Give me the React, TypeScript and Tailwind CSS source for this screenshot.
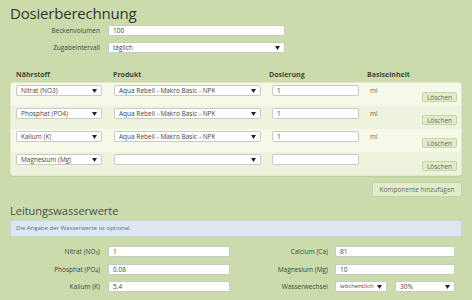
import React from "react";

const FONT = { fontFamily: '"Open Sans", "Noto Sans", sans-serif' };

function Arrow() {
  return (
    <svg width="5" height="4" viewBox="0 0 5 4" className="shrink-0">
      <path d="M0 0 L5 0 L2.5 4 Z" fill="#222" />
    </svg>
  );
}

function Input({ value = "", className = "" }: { value?: string; className?: string }) {
  return (
    <div
      className={`h-[11px] bg-white border border-[#c9c9c9] rounded-[2px] px-[4px] flex items-center text-[6.5px] text-[#444] leading-[9px] ${className}`}
    >
      {value}
    </div>
  );
}

function Select({ value = "", className = "" }: { value?: string; className?: string }) {
  return (
    <div
      className={`h-[11px] bg-white border border-[#c9c9c9] rounded-[2px] pl-[4px] pr-[4px] flex items-center justify-between gap-[2px] text-[6.5px] text-[#444] leading-[9px] ${className}`}
    >
      <span className="whitespace-nowrap overflow-hidden">{value}</span>
      <Arrow />
    </div>
  );
}

function Button({ children, className = "" }: { children: React.ReactNode; className?: string }) {
  return (
    <div
      className={`bg-[#e3ecca] border border-[#c6d5a8] rounded-[2px] text-[6.5px] text-[#5f6e52] flex items-center justify-center leading-[9px] whitespace-nowrap ${className}`}
    >
      {children}
    </div>
  );
}

const ROWS = [
  { n: "Nitrat (NO3)", p: "Aqua Rebell - Makro Basic - NPK", d: "1", u: "ml" },
  { n: "Phosphat (PO4)", p: "Aqua Rebell - Makro Basic - NPK", d: "1", u: "ml" },
  { n: "Kalium (K)", p: "Aqua Rebell - Makro Basic - NPK", d: "1", u: "ml" },
  { n: "Magnesium (Mg)", p: "", d: "", u: "" },
];

function Sub({ children }: { children: React.ReactNode }) {
  return <sub className="text-[4.5px] align-baseline relative top-[1px]">{children}</sub>;
}

export default function App() {
  return (
    <div className="w-[472px] h-[300px] bg-[#cadcab] overflow-hidden relative" style={FONT}>
      <div className="px-[10px] pt-[3px]">
        <h1 className="text-[15px] text-[#333] leading-[20px] tracking-[-0.2px]">Dosierberechnung</h1>

        <div className="flex flex-col gap-[6px] mt-[2px]">
          <div className="flex items-center">
            <div className="w-[90px] text-right text-[6.5px] text-[#444] leading-[9px]">Beckenvolumen</div>
            <Input value="100" className="ml-[8px] w-[177px]" />
          </div>
          <div className="flex items-center">
            <div className="w-[90px] text-right text-[6.5px] text-[#444] leading-[9px]">Zugabeintervall</div>
            <Select value="täglich" className="ml-[8px] w-[177px]" />
          </div>
        </div>

        <div className="flex text-[7px] font-bold text-[#444] mt-[16px] pl-[6px] h-[12px] items-center">
          <div className="w-[97px]">Nährstoff</div>
          <div className="w-[156px]">Produkt</div>
          <div className="w-[98px]">Dosierung</div>
          <div>Basiseinheit</div>
        </div>

        <div className="mt-[1px] rounded-[3px] overflow-hidden border border-[#dfe7cc] shadow-[0_1px_1px_rgba(0,0,0,0.06)]">
          {ROWS.map((r, i) => (
            <div
              key={i}
              className={`flex h-[23px] pl-[5px] pr-[4px] pt-[2px] ${i % 2 === 0 ? "bg-[#f6f9ea]" : "bg-[#eef3de]"}`}
            >
              <Select value={r.n} className="w-[86px]" />
              <Select value={r.p} className="w-[147px] ml-[12px]" />
              <Input value={r.d} className="w-[87px] ml-[11px]" />
              <div className="ml-[11px] text-[6.5px] text-[#666] leading-[9px] pt-[1px] w-[40px]">{r.u}</div>
              <div className="flex-1 flex justify-end items-end pb-[4px]">
                <Button className="w-[35px] h-[10px]">Löschen</Button>
              </div>
            </div>
          ))}
        </div>

        <div className="flex justify-end mt-[6px]">
          <Button className="w-[90px] h-[15px]">Komponente hinzufügen</Button>
        </div>

        <h2 className="text-[11px] text-[#4d4d4d] mt-[6px] leading-[16px]">Leitungswasserwerte</h2>
        <div className="mt-[1px] h-[17px] bg-[#dfe7ee] border border-[#c9d6e0] rounded-[3px] flex items-center px-[5px] text-[6px] leading-[9px] text-[#50708f]">
          Die Angabe der Wasserwerte ist optional.
        </div>

        <div className="flex mt-[9px]">
          <div className="flex flex-col gap-[6.5px]">
            <div className="flex items-center">
              <div className="w-[90px] text-right text-[6.5px] text-[#444] leading-[9px]">Nitrat (NO<Sub>3</Sub>)</div>
              <Input value="1" className="ml-[8px] w-[122px]" />
            </div>
            <div className="flex items-center">
              <div className="w-[90px] text-right text-[6.5px] text-[#444] leading-[9px]">Phosphat (PO<Sub>4</Sub>)</div>
              <Input value="0.08" className="ml-[8px] w-[122px]" />
            </div>
            <div className="flex items-center">
              <div className="w-[90px] text-right text-[6.5px] text-[#444] leading-[9px]">Kalium (K)</div>
              <Input value="5.4" className="ml-[8px] w-[122px]" />
            </div>
          </div>
          <div className="flex flex-col gap-[6.5px] ml-[2px]">
            <div className="flex items-center">
              <div className="w-[96px] text-right text-[6.5px] text-[#444] leading-[9px]">Calcium (Ca)</div>
              <Input value="81" className="ml-[7px] w-[120px]" />
            </div>
            <div className="flex items-center">
              <div className="w-[96px] text-right text-[6.5px] text-[#444] leading-[9px]">Magnesium (Mg)</div>
              <Input value="10" className="ml-[7px] w-[120px]" />
            </div>
            <div className="flex items-center">
              <div className="w-[96px] text-right text-[6.5px] text-[#444] leading-[9px]">Wasserwechsel</div>
              <Select value="wöchentlich" className="ml-[7px] w-[52px] text-[6px]" />
              <Select value="30%" className="ml-[8px] w-[60px]" />
            </div>
          </div>
        </div>
      </div>
    </div>
  );
}
